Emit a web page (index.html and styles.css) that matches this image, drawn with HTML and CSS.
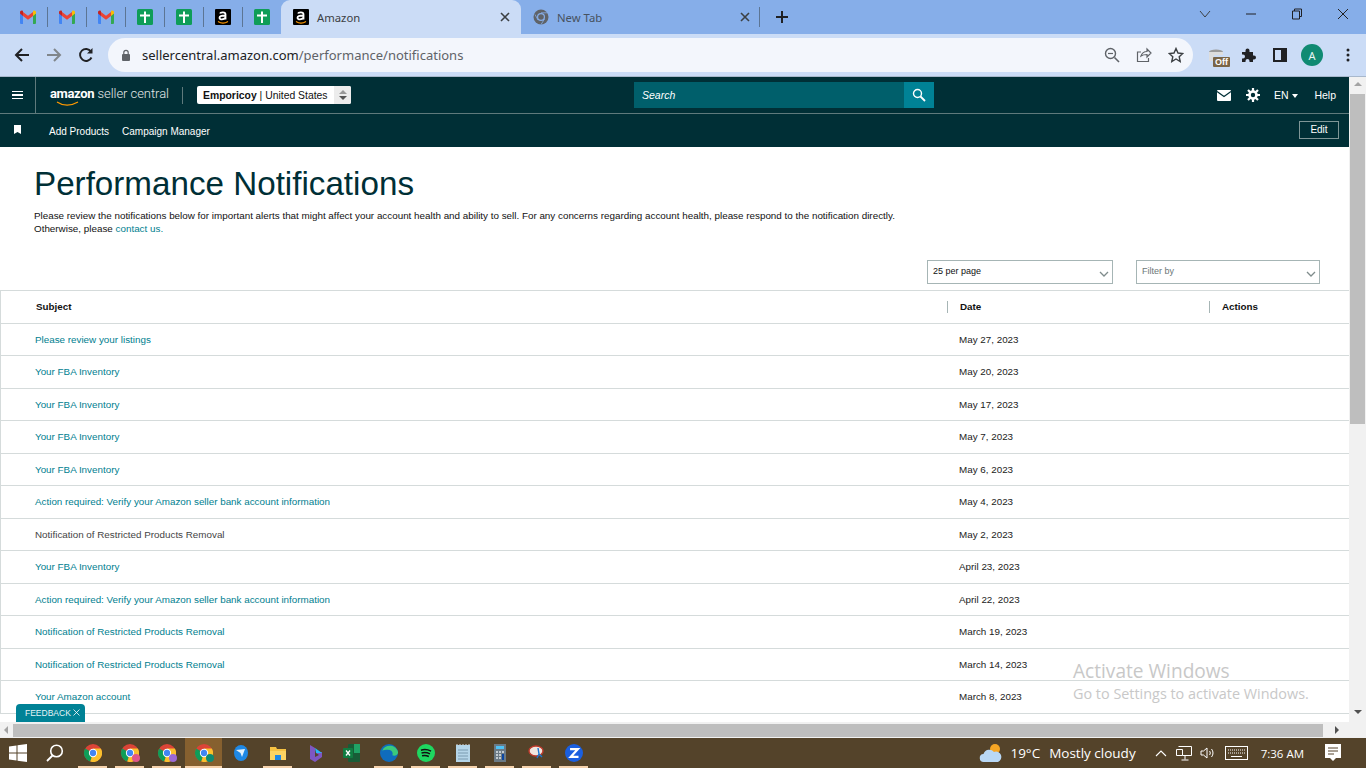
FILE: index.html
```html
<!DOCTYPE html>
<html lang="en">
<head>
    <meta charset="UTF-8">
    <meta name="viewport" content="width=device-width, initial-scale=1.0">
    <title>Amazon</title>
    <link rel="stylesheet" href="styles.css">
</head>
<body>
    <svg class="defs" width="0" height="0">
        <symbol id="gmail" viewBox="0 0 18 14">
            <path d="M1 14V3l3 2.2V14H2a1 1 0 0 1-1-1z" fill="#4285f4"/>
            <path d="M14 14V5.2L17 3v10a1 1 0 0 1-1 1z" fill="#34a853"/>
            <path d="M4 6V2l5 3.8L14 2v4L9 9.8z" fill="#ea4335"/>
            <path d="M1 3.5V2.2C1 .8 2.6 0 3.700 .8L4 1.500V6z" fill="#c5221f"/>
            <path d="M14 6V1.500l.3-.7C15.400 0 17 .8 17 2.200v1.300z" fill="#fbbc04"/>
        </symbol>
        <symbol id="sheet" viewBox="0 0 16 16">
            <rect width="16" height="16" rx="1.500" fill="#0f9d58"/>
            <path d="M3 6.500h10M8 2.500V14" stroke="#fff" stroke-width="2" fill="none"/>
        </symbol>
        <symbol id="amz" viewBox="0 0 16 16">
            <rect width="16" height="16" rx="1" fill="#000"/>
            <path d="M5 4.500C5.500 3 10.500 2.500 10.500 5.500V10.500M10.500 6.500C6 6.500 4.500 7.500 4.500 8.800 4.500 11 9 11 10.500 8.500" stroke="#fff" stroke-width="1.800" fill="none"/>
            <path d="M3 12.500C6 14.500 10 14.500 13 12.500" stroke="#f90" stroke-width="1.100" fill="none"/>
        </symbol>
        <symbol id="chrome" viewBox="0 0 20 20">
            <circle cx="10" cy="10" r="10" fill="#db4437"/>
            <path d="M10 10 1.340 5A10 10 0 0 0 7 19.540z" fill="#0f9d58"/>
            <path d="M10 10 7 19.540A10 10 0 0 0 18.660 5H10z" fill="#fbc02d"/>
            <circle cx="10" cy="10" r="4.600" fill="#fff"/>
            <circle cx="10" cy="10" r="3.500" fill="#4285f4"/>
        </symbol>
    </svg>

    <div class="tabstrip">
        <div class="mini-tab"><svg class="fav" width="18" height="14"><use href="#gmail"/></svg></div>
        <div class="mini-tab"><svg class="fav" width="18" height="14"><use href="#gmail"/></svg></div>
        <div class="mini-tab"><svg class="fav" width="18" height="14"><use href="#gmail"/></svg></div>
        <div class="mini-tab"><svg class="fav" width="16" height="16"><use href="#sheet"/></svg></div>
        <div class="mini-tab"><svg class="fav" width="16" height="16"><use href="#sheet"/></svg></div>
        <div class="mini-tab"><svg class="fav" width="16" height="16"><use href="#amz"/></svg></div>
        <div class="mini-tab last"><svg class="fav" width="16" height="16"><use href="#sheet"/></svg></div>
        <div class="tab active">
            <svg class="fav" width="16" height="16"><use href="#amz"/></svg>
            <span class="tab-title">Amazon</span>
            <svg class="tab-x" width="10" height="10" viewBox="0 0 10 10"><path d="M1 1l8 8M9 1l-8 8" stroke="#3c4043" stroke-width="1.600"/></svg>
        </div>
        <div class="tab idle">
            <svg class="fav" width="16" height="16" viewBox="0 0 16 16"><circle cx="8" cy="8" r="7.500" fill="#5f6368"/><circle cx="8" cy="8" r="4" fill="#86aee9"/><circle cx="8" cy="8" r="2.800" fill="#5f6368"/><path d="M8 3.800h6.500M5 11l-3 -5.500M11.500 10l-3.500 5.500" stroke="#86aee9" stroke-width=".8"/></svg>
            <span class="tab-title">New Tab</span>
            <svg class="tab-x" width="10" height="10" viewBox="0 0 10 10"><path d="M1 1l8 8M9 1l-8 8" stroke="#3c4043" stroke-width="1.600"/></svg>
        </div>
        <svg class="new-tab" width="14" height="14" viewBox="0 0 14 14"><path d="M7 1v12M1 7h12" stroke="#202124" stroke-width="2"/></svg>
        <div class="win-controls">
            <svg width="12" height="12" viewBox="0 0 12 12"><path d="M1 3l5 6 5-6" stroke="#3c4043" fill="none"/></svg>
            <svg width="12" height="12" viewBox="0 0 12 12"><path d="M1 6h10" stroke="#202124"/></svg>
            <svg width="12" height="12" viewBox="0 0 12 12"><path d="M3.500 3V1h7v7.500H8.500M1.500 3h7v8h-7z" stroke="#202124" fill="none"/></svg>
            <svg width="12" height="12" viewBox="0 0 12 12"><path d="M1 1l10 10M11 1L1 11" stroke="#202124"/></svg>
        </div>
    </div>

    <div class="toolbar">
        <svg class="tool" width="16" height="16" viewBox="0 0 16 16"><path d="M15 8H2M8 2L2 8l6 6" stroke="#202124" stroke-width="2" fill="none"/></svg>
        <svg class="tool" width="16" height="16" viewBox="0 0 16 16"><path d="M1 8h13M8 2l6 6-6 6" stroke="#80868b" stroke-width="2" fill="none"/></svg>
        <svg class="tool" width="16" height="16" viewBox="0 0 16 16"><path d="M13.500 10.500A6 6 0 1 1 13 4.500" stroke="#202124" stroke-width="1.900" fill="none"/><path d="M14.500 1v5.500H9z" fill="#202124"/></svg>
        <div class="omnibox">
            <svg width="10" height="12" viewBox="0 0 10 12"><rect x="1" y="5" width="8" height="7" rx="1" fill="#5f6368"/><path d="M2.800 5V3.500a2.200 2.200 0 0 1 4.400 0V5" stroke="#5f6368" stroke-width="1.200" fill="none"/></svg>
            <span class="url">sellercentral.amazon.com<span class="url-path">/performance/notifications</span></span>
            <div class="omni-icons">
                <svg width="16" height="16" viewBox="0 0 16 16"><circle cx="6.500" cy="6.500" r="5" stroke="#5f6368" stroke-width="1.400" fill="none"/><path d="M10.500 10.500L15 15" stroke="#5f6368" stroke-width="1.600"/><path d="M4 6.500h5" stroke="#5f6368" stroke-width="1.200"/></svg>
                <svg width="16" height="16" viewBox="0 0 16 16"><path d="M5 9c1-3 3.500-4.500 6-4.500V2l4 4-4 4V7.500C8.500 7.500 6.500 8 5 9zM12.500 11v3.500h-11V5H5" stroke="#5f6368" stroke-width="1.200" fill="none"/></svg>
                <svg width="16" height="16" viewBox="0 0 16 16"><path d="M8 1.500l2 4.500 4.800.5-3.600 3.200 1 4.800L8 12l-4.200 2.500 1-4.800L1.200 6.500 6 6z" stroke="#3c4043" stroke-width="1.400" fill="none"/></svg>
            </div>
        </div>
        <div class="ext-off">
            <svg width="20" height="12" viewBox="0 0 20 12"><ellipse cx="8" cy="3" rx="7" ry="2.500" fill="#9a9a9a"/><path d="M1 3v9h5V6H15V3" fill="#ddd"/></svg>
            <span class="off-badge">Off</span>
        </div>
        <svg class="ext puzzle" width="16" height="16" viewBox="0 0 16 16"><path d="M1 5h3.500V3.500a2 2 0 0 1 4 0V5H12v3.500h1a2 2 0 0 1 0 4h-1V15H8.500v-1a2 2 0 0 0-4 0v1H1v-3.500h1a2 2 0 0 0 0-4H1z" fill="#202124"/></svg>
        <svg class="ext panel" width="14" height="14" viewBox="0 0 14 14"><rect x="1" y="1" width="12" height="12" fill="none" stroke="#202124" stroke-width="2"/><rect x="8" y="1" width="5" height="12" fill="#202124"/></svg>
        <div class="avatar">A</div>
        <svg class="ext" width="4" height="14" viewBox="0 0 4 14"><circle cx="2" cy="2" r="1.500" fill="#202124"/><circle cx="2" cy="7" r="1.500" fill="#202124"/><circle cx="2" cy="12" r="1.500" fill="#202124"/></svg>
    </div>

    <div class="viewport">
        <div class="page-col">
            <div class="page">
                <header class="sc-header">
                    <div class="sc-top">
                        <div class="burger"><span></span><span></span><span></span></div>
                        <div class="logo">
                            <span class="logo-amazon">amazon</span> <span class="logo-rest">seller central</span>
                            <svg class="smile" width="24" height="6" viewBox="0 0 24 6"><path d="M1 1c6 4 14 4 21 0" stroke="#f90" stroke-width="1.200" fill="none"/></svg>
                        </div>
                        <div class="acct-select">
                            <span><b class="acct-name">Emporicoy</b> | United States</span>
                            <span class="acct-arrows"><i class="up"></i><i class="down"></i></span>
                        </div>
                        <div class="sc-search">
                            <span class="search-input">Search</span>
                            <span class="search-btn">
                                <svg width="14" height="14" viewBox="0 0 14 14"><circle cx="5.500" cy="5.500" r="4" stroke="#fff" stroke-width="1.400" fill="none"/><path d="M8.500 8.500L13 13" stroke="#fff" stroke-width="1.800"/></svg>
                            </span>
                        </div>
                        <div class="sc-right">
                            <svg width="14" height="11" viewBox="0 0 14 11"><rect width="14" height="11" rx="1" fill="#fff"/><path d="M0 1.500l7 5 7-5" stroke="#002f36" stroke-width="1.200" fill="none"/></svg>
                            <svg class="gear" width="14" height="14" viewBox="0 0 14 14"><circle cx="7" cy="7" r="3.500" fill="none" stroke="#fff" stroke-width="2.600"/><path d="M7 0v3M7 11v3M0 7h3M11 7h3M2 2l2 2M10 10l2 2M12 2l-2 2M4 10l-2 2" stroke="#fff" stroke-width="2.200"/></svg>
                            <span class="lang">EN <i class="lang-caret"></i></span>
                            <span class="help">Help</span>
                        </div>
                    </div>
                    <div class="sc-bottom">
                        <svg class="bookmark" width="7" height="9" viewBox="0 0 7 9"><path d="M0 0h7v9L3.500 7 0 9z" fill="#fff"/></svg>
                        <a class="nav-link">Add Products</a>
                        <a class="nav-link">Campaign Manager</a>
                        <span class="edit-btn">Edit</span>
                    </div>
                </header>

                <main class="content">
                    <h1>Performance Notifications</h1>
                    <p class="intro">Please review the notifications below for important alerts that might affect your account health and ability to sell. For any concerns regarding account health, please respond to the notification directly.<br>Otherwise, please <a class="link">contact us.</a></p>
                    <div class="filters">
                        <div class="drop per-page">25 per page<svg width="10" height="6" viewBox="0 0 10 6"><path d="M1 1l4 4 4-4" stroke="#7f8c8c" stroke-width="1.300" fill="none"/></svg></div>
                        <div class="drop filter-by">Filter by<svg width="10" height="6" viewBox="0 0 10 6"><path d="M1 1l4 4 4-4" stroke="#7f8c8c" stroke-width="1.300" fill="none"/></svg></div>
                    </div>
                    <div class="table">
                        <div class="row head">
                            <div class="cell">Subject</div>
                            <div class="cell"><span class="divider"></span>Date</div>
                            <div class="cell"><span class="divider"></span>Actions</div>
                        </div>
                        <div class="row"><a class="cell link">Please review your listings</a><div class="cell date">May 27, 2023</div></div>
                        <div class="row"><a class="cell link">Your FBA Inventory</a><div class="cell date">May 20, 2023</div></div>
                        <div class="row"><a class="cell link">Your FBA Inventory</a><div class="cell date">May 17, 2023</div></div>
                        <div class="row"><a class="cell link">Your FBA Inventory</a><div class="cell date">May 7, 2023</div></div>
                        <div class="row"><a class="cell link">Your FBA Inventory</a><div class="cell date">May 6, 2023</div></div>
                        <div class="row"><a class="cell link">Action required: Verify your Amazon seller bank account information</a><div class="cell date">May 4, 2023</div></div>
                        <div class="row"><a class="cell plain">Notification of Restricted Products Removal</a><div class="cell date">May 2, 2023</div></div>
                        <div class="row"><a class="cell link">Your FBA Inventory</a><div class="cell date">April 23, 2023</div></div>
                        <div class="row"><a class="cell link">Action required: Verify your Amazon seller bank account information</a><div class="cell date">April 22, 2023</div></div>
                        <div class="row"><a class="cell link">Notification of Restricted Products Removal</a><div class="cell date">March 19, 2023</div></div>
                        <div class="row"><a class="cell link">Notification of Restricted Products Removal</a><div class="cell date">March 14, 2023</div></div>
                        <div class="row"><a class="cell link">Your Amazon account</a><div class="cell date">March 8, 2023</div></div>
                    </div>
                </main>
            </div>
            <div class="feedback">FEEDBACK <svg width="7" height="7" viewBox="0 0 7 7"><path d="M.5 .5l6 6M6.500 .5l-6 6" stroke="#fff" stroke-width=".8"/></svg></div>
            <div class="h-scroll">
                <i class="arrow-left"></i>
                <div class="h-thumb"></div>
                <i class="arrow-right"></i>
            </div>
        </div>
        <div class="v-scroll">
            <i class="arrow-up"></i>
            <div class="v-thumb"></div>
            <i class="arrow-down"></i>
        </div>
        <div class="activate">
            <div class="activate-title">Activate Windows</div>
            <div class="activate-sub">Go to Settings to activate Windows.</div>
        </div>
    </div>

    <footer class="taskbar">
        <svg class="task" width="18" height="18" viewBox="0 0 18 18"><path d="M0 2.500L7.500 1.400V8.500H0zM8.500 1.300L18 0V8.500H8.500zM0 9.500H7.500V16.600L0 15.500zM8.500 9.500H18V18L8.500 16.700z" fill="#fff"/></svg>
        <div class="task finder"><svg width="18" height="18" viewBox="0 0 18 18"><circle cx="10.500" cy="7" r="5.800" stroke="#fff" stroke-width="1.600" fill="none"/><path d="M6.500 11.500L1 17" stroke="#fff" stroke-width="1.800"/></svg></div>
        <div class="task on"><svg width="18" height="18"><use href="#chrome"/></svg></div>
        <div class="task on"><svg width="18" height="18"><use href="#chrome"/></svg><i class="dot pink"></i></div>
        <div class="task on"><svg width="18" height="18"><use href="#chrome"/></svg><i class="dot violet"></i></div>
        <div class="task on current"><svg width="18" height="18"><use href="#chrome"/></svg><i class="dot teal"></i></div>
        <div class="task"><svg width="16" height="18" viewBox="0 0 16 18"><ellipse cx="8" cy="9" rx="7" ry="8" fill="#1e88e5"/><path d="M3 6l9-1-3 8-1.500-4z" fill="#e3f2fd"/></svg></div>
        <div class="task on"><svg width="16" height="14" viewBox="0 0 16 14"><path d="M0 1h6l1 2h9v11H0z" fill="#f6c243"/><rect x="0" y="5" width="16" height="9" fill="#fcd462"/><rect x="5" y="9" width="6" height="5" fill="#1e88e5"/></svg></div>
        <div class="task"><svg width="16" height="18" viewBox="0 0 16 18"><path d="M3 1l5 3v9l4-2-3-2 6-1v5l-7 5-5-3z" fill="#7e57c2"/><path d="M8 4l7 5-6 0z" fill="#29b6f6"/></svg></div>
        <div class="task"><svg width="17" height="18" viewBox="0 0 17 18"><rect x="5" y="0" width="12" height="18" rx="1" fill="#185c37"/><rect x="11" y="0" width="6" height="9" fill="#21a366"/><rect x="0" y="4" width="10" height="10" rx="1" fill="#107c41"/><path d="M3 6.500l4 5M7 6.500l-4 5" stroke="#fff" stroke-width="1.300"/></svg></div>
        <div class="task on"><svg width="18" height="18" viewBox="0 0 16 16"><circle cx="8" cy="8" r="8" fill="#0f6cbd"/><path d="M2 6c2-6 12-6 14 1 .5 3-3 4-5 3 1-3-1-5-4-5-2 0-4 0-5 1z" fill="#3bc97d"/></svg></div>
        <div class="task on"><svg width="18" height="18" viewBox="0 0 16 16"><circle cx="8" cy="8" r="8" fill="#1ed760"/><path d="M3.500 5.500c3-1 6-.7 9 .8M4 8c2.500-.7 5-.5 7.500.8M4.500 10.500c2-.5 4-.4 6 .6" stroke="#111" stroke-width="1.300" fill="none"/></svg></div>
        <div class="task on"><svg width="14" height="18" viewBox="0 0 14 18"><rect x="0" y="1" width="14" height="17" fill="#b5d5e8"/><path d="M2 6h10M2 9h10M2 12h10M2 15h10" stroke="#7a9bb0"/><path d="M1 1v-1M4 1v-1M7 1v-1M10 1v-1M13 1v-1" stroke="#ddd"/></svg></div>
        <div class="task on"><svg width="12" height="20" viewBox="0 0 12 18"><rect width="12" height="18" fill="#6b7a85"/><rect x="2" y="2" width="8" height="3" fill="#4fc3f7"/><path d="M2 8h2M5 8h2M8 8h2M2 11h2M5 11h2M2 14h2M5 14h2" stroke="#dfe6ea" stroke-width="1.600"/><rect x="8" y="10" width="2" height="6" fill="#0d47a1"/></svg></div>
        <div class="task on"><svg width="18" height="16" viewBox="0 0 18 16"><ellipse cx="8" cy="6" rx="7" ry="5" fill="#f1e6df" stroke="#c0392b" stroke-width="1.400"/><path d="M10 3l1 6-2 4M11 9l3 3" stroke="#1976d2" stroke-width="1.400" fill="none"/></svg></div>
        <div class="task on"><svg width="18" height="18" viewBox="0 0 16 16"><circle cx="8" cy="8" r="8" fill="#1a5fe0"/><path d="M4.500 4.500h7L5 11.500h7" stroke="#fff" stroke-width="1.900" fill="none"/></svg></div>

        <div class="tray">
            <svg class="weather" width="24" height="20" viewBox="0 0 24 20"><circle cx="16" cy="6" r="5" fill="#f5a524"/><path d="M5 19a4 4 0 0 1-.5-8A6 6 0 0 1 15 9a4.500 4.500 0 0 1 4 10z" fill="#b9d8f5"/></svg>
            <span class="temp">19°C</span>
            <span class="sky">Mostly cloudy</span>
            <svg class="tray-up" width="12" height="7" viewBox="0 0 12 7"><path d="M1 6l5-5 5 5" stroke="#fff" fill="none" stroke-width="1.100"/></svg>
            <svg class="tray-net" width="16" height="15" viewBox="0 0 16 15"><path d="M2.500 .5h13v9h-9M.5 3.500h6v6h-6zM9 9.500v4M5.500 14h7" stroke="#fff" fill="none"/></svg>
            <svg class="tray-vol" width="15" height="14" viewBox="0 0 15 14"><path d="M1 5h2.500L7 2v10L3.500 9H1z M9.500 5c1 1.200 1 2.800 0 4M11.500 3c2 2.300 2 5.700 0 8" stroke="#fff" fill="none"/></svg>
            <svg class="tray-kbd" width="23" height="14" viewBox="0 0 23 14"><rect x=".5" y=".5" width="22" height="13" fill="none" stroke="#fff"/><path d="M3 4h17M3 7h17" stroke="#fff" stroke-dasharray="1 1"/><path d="M6 10.500h11" stroke="#fff"/></svg>
            <span class="clock">7:36 AM</span>
            <svg class="tray-note" width="16" height="18" viewBox="0 0 16 18"><path d="M0 0h16v14h-5l-3 3-3-3H0z" fill="#fff"/><path d="M3 4h10M3 7h10M3 10h6" stroke="#54432a"/></svg>
        </div>
    </footer>
</body>
</html>
```

FILE: styles.css
```css
* {
    box-sizing: border-box;
}
html, body {
    margin: 0;
    height: 768px;
    overflow: hidden;
}
body {
    display: flex;
    flex-direction: column;
    font-family: "Liberation Sans", Arial, sans-serif;
    background: #fff;
}
.defs {
    position: absolute;
}

/* browser chrome */
.tabstrip {
    height: 34px;
    flex: none;
    display: flex;
    align-items: center;
    background: #86aee9;
    padding-left: 9px;
}
.mini-tab {
    width: 39px;
    height: 20px;
    display: flex;
    align-items: center;
    justify-content: center;
    border-right: 1px solid #5c7594;
}
.mini-tab.last {
    border-right: none;
    width: 38px;
}
.tab {
    width: 240px;
    height: 34px;
    display: flex;
    align-items: center;
    padding: 0 11px 0 12px;
    gap: 7px;
    font-family: "Noto Sans", sans-serif;
    font-size: 11.300px;
    color: #46525f;
}
.tab.active {
    height: 34px;
    background: #cbdcf6;
    border-radius: 9px 9px 0 0;
    color: #3c4043;
}
.tab.idle {
    width: 239px;
    position: relative;
    padding-right: 10px;
}
.tab.idle::after {
    content: "";
    position: absolute;
    right: 0;
    top: 7px;
    height: 20px;
    width: 1px;
    background: #5c7594;
}
.tab-title {
    flex: 1;
    padding-left: 1px;
}
.new-tab {
    margin-left: 15px;
}
.win-controls {
    margin-left: auto;
    display: flex;
    align-items: center;
    gap: 34px;
    padding-right: 17px;
    margin-top: -6px;
}
.toolbar {
    height: 43px;
    flex: none;
    display: flex;
    align-items: center;
    background: #cbdcf6;
    border-bottom: 1px solid #a8b8cc;
    padding: 0 0 0 14px;
}
.tool {
    margin-right: 16px;
}
.omnibox {
    width: 1085px;
    height: 34px;
    margin-left: -2px;
    margin-top: -1px;
    display: flex;
    align-items: center;
    gap: 11px;
    background: #f3f6fc;
    border-radius: 17px;
    padding: 0 9px 0 13px;
}
.url {
    font-family: "Noto Sans", sans-serif;
    font-size: 13px;
    color: #202124;
}
.url-path {
    color: #5f6368;
}
.omni-icons {
    margin-left: auto;
    display: flex;
    gap: 16px;
}
.ext-off {
    position: relative;
    width: 22px;
    height: 20px;
    margin: 3px 11px 0 15px;
}
.off-badge {
    position: absolute;
    right: 0;
    bottom: 0;
    background: #7a6546;
    color: #fff;
    font-size: 9px;
    font-weight: bold;
    padding: 0 2px;
    border-radius: 1px;
}
.ext {
    flex: none;
}
.puzzle {
    margin-right: 16px;
}
.panel {
    margin-right: 14px;
}
.avatar {
    width: 22px;
    height: 22px;
    border-radius: 50%;
    background: #0f8a72;
    color: #e8f5f2;
    font-family: "Noto Sans", sans-serif;
    font-size: 11px;
    display: flex;
    align-items: center;
    justify-content: center;
    margin-right: 23px;
}

/* page area */
.viewport {
    flex: 1;
    min-height: 0;
    display: flex;
    position: relative;
}
.page-col {
    flex: 1;
    min-width: 0;
    display: flex;
    flex-direction: column;
    position: relative;
}
.page {
    flex: 1;
    min-height: 0;
    overflow: hidden;
}
.sc-header {
    background: #002f36;
    color: #fff;
    height: 70px;
}
.sc-top {
    height: 37px;
    display: flex;
    align-items: center;
    border-bottom: 1px solid #5f7a7c;
}
.burger {
    width: 36px;
    height: 36px;
    flex: none;
    display: flex;
    flex-direction: column;
    justify-content: center;
    gap: 2px;
    padding-left: 12px;
    border-right: 1px solid #5f7a7c;
}
.burger span {
    display: block;
    width: 11px;
    height: 1.500px;
    background: #fff;
}
.logo {
    width: 133px;
    flex: none;
    position: relative;
    margin-left: 14px;
    font-family: Roboto, sans-serif;
    font-size: 13px;
    padding-bottom: 3px;
    border-right: 1px solid #5f7a7c;
    white-space: nowrap;
    line-height: 14px;
}
.logo-amazon {
    font-weight: 700;
    letter-spacing: -.35px;
}
.logo-rest {
    font-weight: 300;
    letter-spacing: -.05px;
    color: #e3e8e8;
}
.smile {
    position: absolute;
    left: 6px;
    bottom: -3px;
}
.acct-select {
    flex: none;
    margin-left: 14px;
    width: 154px;
    height: 18px;
    background: #fff;
    border-radius: 2px;
    color: #111;
    font-size: 10.400px;
    display: flex;
    align-items: center;
    justify-content: space-between;
    padding-left: 6px;
    overflow: hidden;
}
.acct-name {
    font-weight: bold;
}
.acct-arrows {
    width: 17px;
    height: 18px;
    background: #ececec;
    display: flex;
    flex-direction: column;
    align-items: center;
    justify-content: center;
    gap: 2px;
}
.up, .down {
    width: 0;
    height: 0;
    border-left: 4px solid transparent;
    border-right: 4px solid transparent;
}
.up {
    border-bottom: 4px solid #999;
}
.down {
    border-top: 4px solid #555;
}
.sc-search {
    flex: none;
    margin-left: 283px;
    width: 300px;
    height: 26px;
    display: flex;
    background: #005f6b;
}
.search-input {
    flex: 1;
    font-size: 10.500px;
    font-style: italic;
    padding-left: 8px;
    line-height: 26px;
}
.search-btn {
    width: 30px;
    background: #008296;
    display: flex;
    align-items: center;
    justify-content: center;
}
.sc-right {
    margin-left: auto;
    display: flex;
    align-items: center;
    padding-right: 13px;
    font-size: 10.500px;
    font-weight: 500;
}
.gear {
    margin-left: 15px;
}
.lang {
    margin-left: 14px;
}
.lang-caret {
    display: inline-block;
    width: 0;
    height: 0;
    margin: 0 0 1px 1px;
    border-left: 3px solid transparent;
    border-right: 3px solid transparent;
    border-top: 4px solid #fff;
}
.help {
    margin-left: 16px;
}
.sc-bottom {
    height: 33px;
    display: flex;
    align-items: center;
    padding: 1px 10px 0 14px;
    font-size: 10px;
}
.bookmark {
    margin-right: 28px;
    margin-top: -4px;
}
.nav-link {
    margin-right: 13px;
}
.edit-btn {
    margin-left: auto;
    width: 40px;
    height: 18px;
    border: 1px solid #7f9697;
    line-height: 16px;
    text-align: center;
    margin-top: -3px;
}

.content {
    padding-top: 15px;
    color: #111;
}
h1 {
    margin: 0 0 0 34px;
    font-size: 33.200px;
    line-height: 44px;
    font-weight: normal;
    color: #002f36;
}
.intro {
    margin: 3px 0 0 34px;
    font-size: 9.850px;
    line-height: 13px;
    color: #111;
}
.link {
    color: #00808f;
}
.filters {
    display: flex;
    margin-top: 25px;
    padding-left: 927px;
    gap: 23px;
}
.drop {
    height: 24px;
    border: 1px solid #a6b5b5;
    display: flex;
    align-items: center;
    justify-content: space-between;
    padding: 0 3px 2px 5px;
    font-size: 9px;
}
.drop svg {
    margin-top: 5px;
}
.per-page {
    width: 186px;
}
.filter-by {
    width: 184px;
    color: #6c7778;
}
.table {
    margin-top: 6px;
    border-top: 1px solid #d5dbdb;
    border-left: 1px solid #d5dbdb;
}
.row {
    height: 32.500px;
    display: grid;
    grid-template-columns: 946px 262px 1fr;
    align-items: center;
    border-bottom: 1px solid #d5dbdb;
    font-size: 9.830px;
}
.row.head {
    font-weight: bold;
    color: #111;
}
.cell {
    padding-left: 34px;
}
.row .date {
    padding-left: 12px;
    color: #222;
}
.head .cell + .cell {
    padding-left: 0;
    display: flex;
    align-items: center;
}
.head .cell:first-child {
    padding-left: 35px;
}
.divider {
    width: 1px;
    height: 12px;
    background: #a6b5b5;
    margin-right: 12px;
}
.plain {
    color: #444;
}
.feedback {
    position: absolute;
    left: 16px;
    bottom: 16px;
    width: 69px;
    height: 18px;
    background: #008296;
    border-radius: 4px 4px 0 0;
    color: #e8f4f6;
    font-size: 8.500px;
    line-height: 18px;
    padding-left: 9px;
}
.h-scroll {
    height: 16px;
    flex: none;
    background: #f1f1f1;
    display: flex;
    align-items: center;
    padding: 0 4px;
}
.h-thumb {
    width: 1310px;
    height: 13px;
    background: #bebebe;
    margin: 0 12px 0 5px;
}
.arrow-left, .arrow-right, .arrow-up, .arrow-down {
    width: 0;
    height: 0;
    flex: none;
    display: block;
}
.arrow-left {
    border-top: 4px solid transparent;
    border-bottom: 4px solid transparent;
    border-right: 4px solid #a3a3a3;
}
.arrow-right {
    border-top: 4px solid transparent;
    border-bottom: 4px solid transparent;
    border-left: 4px solid #505050;
}
.v-scroll {
    width: 17px;
    flex: none;
    background: #f1f1f1;
    display: flex;
    flex-direction: column;
    align-items: center;
    padding-top: 5px;
}
.v-thumb {
    width: 15px;
    height: 330px;
    background: #bebebe;
    margin: 8px 0 286px;
}
.arrow-up {
    border-left: 4px solid transparent;
    border-right: 4px solid transparent;
    border-bottom: 4px solid #a3a3a3;
}
.arrow-down {
    border-left: 4px solid transparent;
    border-right: 4px solid transparent;
    border-top: 4px solid #505050;
}
.activate {
    position: absolute;
    left: 1073px;
    top: 582px;
    font-family: "Open Sans", sans-serif;
    color: #c8c8c8;
    pointer-events: none;
}
.activate-title {
    font-size: 19.100px;
    line-height: 25px;
}
.activate-sub {
    font-size: 14.400px;
    line-height: 20px;
}

/* windows taskbar */
.taskbar {
    height: 30px;
    flex: none;
    display: flex;
    align-items: center;
    background: #54432a;
    color: #fff;
    padding-left: 9px;
}
.taskbar > svg.task {
    margin-right: 9px;
    width: 18px;
}
.task {
    width: 37px;
    height: 30px;
    flex: none;
    display: flex;
    align-items: center;
    justify-content: center;
    position: relative;
}
.finder {
    margin-right: 1px;
}
.task.on::after {
    content: "";
    position: absolute;
    left: 4px;
    right: 4px;
    bottom: 0;
    height: 2px;
    background: #f6d3ad;
}
.task.current {
    background: #86602f;
}
.task.current::after {
    left: 0;
    right: 0;
}
.dot {
    position: absolute;
    right: 8px;
    bottom: 6px;
    width: 8px;
    height: 8px;
    border-radius: 50%;
}
.pink {
    background: #e0568a;
}
.violet {
    background: #9c6ad6;
}
.teal {
    background: #0f8a72;
}
.tray {
    margin-left: auto;
    display: flex;
    align-items: center;
    font-family: "Open Sans", sans-serif;
    font-size: 13.500px;
    padding-right: 25px;
}
.weather {
    margin-right: 7px;
}
.sky {
    margin-left: 9px;
}
.tray-up {
    margin-left: 19px;
}
.tray-net {
    margin-left: 9px;
}
.tray-vol {
    margin-left: 8px;
}
.tray-kbd {
    margin-left: 10px;
}
.clock {
    margin-left: 13px;
    font-size: 11.500px;
}
.tray-note {
    margin-left: 21px;
}
```
